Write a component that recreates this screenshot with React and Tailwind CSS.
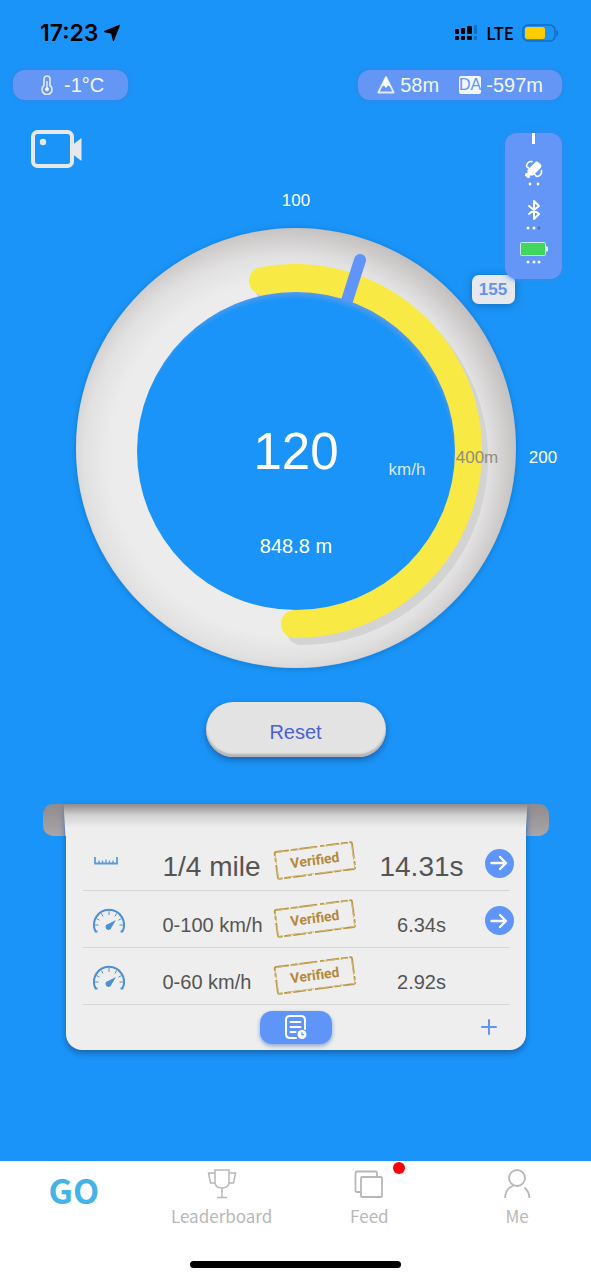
import { Plus } from 'lucide-react'

const runs = [
  { id: 1, name: '1/4 mile', time: '14.31s', icon: 'ruler', large: true, details: true },
  { id: 2, name: '0-100 km/h', time: '6.34s', icon: 'speed', large: false, details: true },
  { id: 3, name: '0-60 km/h', time: '2.92s', icon: 'speed', large: false, details: false },
]

function StatusBar() {
  return (
    <div className="flex h-[70px] items-center justify-between pr-8 pb-1 pl-10 text-black">
      <div className="flex items-center gap-1">
        <span className="font-[Inter,sans-serif] text-[23px] leading-7 font-semibold">17:23</span>
        <svg width="18" height="18" viewBox="0 0 18 18" aria-hidden="true">
          <path d="M16.6 1.2 10.4 17 8.6 9.2 1 7.6Z" fill="currentColor" stroke="currentColor" strokeLinejoin="round" />
        </svg>
      </div>
      <div className="flex items-center gap-2">
        <svg width="25" height="18" viewBox="0 0 25 18" aria-hidden="true">
          <g fill="#000">
            <rect x="2" y="5" width="4" height="5" rx="1" />
            <rect x="8" y="4" width="4" height="6" rx="1" />
            <rect x="14" y="2" width="5" height="8" rx="1" />
            <rect x="2" y="12" width="4" height="4" rx="1" />
            <rect x="8" y="12" width="4" height="4" rx="1" />
            <rect x="14" y="12" width="5" height="4" rx="1" />
          </g>
          <g fill="#0f6fc4">
            <rect x="21" y="1" width="3" height="9" rx="1" />
            <rect x="21" y="12" width="3" height="4" rx="1" />
          </g>
        </svg>
        <span className="font-['Noto_Sans_CJK_SC',sans-serif] text-[17px] leading-6 font-medium">LTE</span>
        <svg width="37" height="18" viewBox="0 0 37 18" aria-hidden="true">
          <rect x="1" y="1" width="32" height="16" rx="5" fill="none" stroke="#1769b5" strokeWidth="1.5" />
          <path d="M35 6.5q1.6 2.5 0 5Z" fill="#1769b5" stroke="#1769b5" />
          <rect x="3" y="3" width="20" height="12" rx="2.5" fill="#ffcc02" />
        </svg>
      </div>
    </div>
  )
}

function WeatherBar() {
  const chip = 'flex h-[30px] items-center rounded-xl bg-[#6496f5] text-xl leading-6 shadow-[0_0_5px_#3d7fe0]'
  return (
    <div className="flex justify-between pr-[29px] pl-[13px] text-[#f2f6ff]">
      <div className={`${chip} gap-[11px] pr-6 pl-7`}>
        <svg width="12" height="20" viewBox="0 0 12 20" fill="none" stroke="#dfe9ff" aria-hidden="true">
          <path d="M3 10.5V4a3 3 0 0 1 6 0v6.5a5 5 0 1 1-6 0Z" strokeWidth="1.7" />
          <path d="M6 6v8" strokeWidth="1.5" />
          <circle cx="6" cy="14.2" r="1.7" fill="#fff" />
        </svg>
        <span>-1°C</span>
      </div>
      <div className={`${chip} gap-5 px-[19px]`}>
        <span className="flex items-center gap-[5px]">
          <svg width="18" height="18" viewBox="0 0 18 18" aria-hidden="true">
            <path d="M9 1 1.3 16.5h15.4Z" fill="none" stroke="#dfe9ff" strokeWidth="1.8" strokeLinejoin="round" />
            <path d="M9 1 4 11 7 9.5l2 2.5 2-2.500 3 1.500Z" fill="#fff" />
          </svg>
          58m
        </span>
        <span className="flex items-center gap-[5px]">
          <span className="rounded-xs bg-[#f2f6ff] text-base leading-[18px] text-[#6496f5]">DA</span>
          -597m
        </span>
      </div>
    </div>
  )
}

function Dots({ children }) {
  return (
    <svg width="16" height="4" viewBox="0 0 16 4" fill="#fff" aria-hidden="true">
      {children}
    </svg>
  )
}

function DevicePanel() {
  return (
    <div className="mt-[3px] flex h-[146px] w-[57px] flex-col items-center rounded-xl bg-[#6496f7] shadow-[0_0_6px_#3d86e8]">
      <div className="h-[11px] w-[3px] bg-white" />
      <svg className="mt-4" width="18" height="18" viewBox="0 0 18 18" aria-hidden="true">
        <g transform="rotate(-45 9 9)" fill="#fff">
          <rect x="2" y="5" width="15" height="8" rx="3" />
          <path d="M5 9-2 5v8Z" />
        </g>
        <g fill="none" stroke="#fff" strokeWidth="1.6" strokeLinecap="round">
          <path d="M7 1.600Q2 1 1.500 6.500l2 1.500" />
          <path d="M16.500 10.500Q17 16 11.500 16.500L10 14.500" />
        </g>
      </svg>
      <div className="mt-1">
        <Dots>
          <circle cx="4" cy="2" r="1.4" />
          <circle cx="12" cy="2" r="1.4" />
        </Dots>
      </div>
      <svg className="mt-3" width="16" height="24" viewBox="0 0 16 24" fill="none" stroke="#fff" strokeWidth="2" aria-hidden="true">
        <path d="M3 8l10 8-5 5V3l5 5L3 16" strokeLinejoin="round" strokeLinecap="round" />
      </svg>
      <div className="mt-1">
        <Dots>
          <circle cx="2" cy="2" r="1.5" />
          <circle cx="8" cy="2" r="1.5" />
          <circle cx="13" cy="2" r="1.5" fill="#4a6fc0" />
        </Dots>
      </div>
      <svg className="mt-3" width="28" height="14" viewBox="0 0 28 14" aria-hidden="true">
        <rect x="0.5" y="0.5" width="25" height="13" rx="1" fill="#43d65c" stroke="#c5e8f0" />
        <path d="M26 4.5h1q1 0 1 1v3q0 1-1 1h-1Z" fill="#e4ecff" />
      </svg>
      <div className="mt-1">
        <Dots>
          <circle cx="2" cy="2" r="1.5" />
          <circle cx="8" cy="2" r="1.5" />
          <circle cx="13" cy="2" r="1.5" />
        </Dots>
      </div>
    </div>
  )
}

function Gauge() {
  return (
    <svg className="mx-auto mt-[88px] w-[560px] max-w-full" viewBox="0 0 560 492" role="img" aria-label="Speed">
      <defs>
        <radialGradient id="ring" gradientUnits="userSpaceOnUse" cx="270" cy="270" r="232">
          <stop offset="0.76" stopColor="#ececec" />
          <stop offset="0.87" stopColor="#e2e1e1" />
          <stop offset="1" stopColor="#c4c1c0" />
        </radialGradient>
        <radialGradient id="dial" gradientUnits="userSpaceOnUse" cx="278" cy="270" r="167">
          <stop offset="0.95" stopColor="#1a94f8" />
          <stop offset="1" stopColor="#5c9bea" />
        </radialGradient>
        <filter id="soft" x="-10%" y="-10%" width="120%" height="120%">
          <feDropShadow dx="0" dy="1" stdDeviation="3" floodColor="#1565b5" floodOpacity="0.6" />
        </filter>
        <filter id="tipShadow" x="-40%" y="-40%" width="180%" height="200%">
          <feDropShadow dx="0" dy="1" stdDeviation="4" floodColor="#123f75" floodOpacity="0.5" />
        </filter>
      </defs>
      <circle cx="280" cy="260" r="220" fill="url(#ring)" filter="url(#soft)" />
      <g fill="none" strokeWidth="28" strokeLinecap="round">
        <path d="M247 93A173 173 0 1 1 279 436" stroke="#d3d3d3" transform="translate(6 7)" />
        <path d="M247 93A173 173 0 1 1 279 436" stroke="#f8e945" />
      </g>
      <path d="M344 72 330 116" stroke="#5f95f8" strokeWidth="12" strokeLinecap="round" />
      <circle cx="280" cy="263" r="159" fill="url(#dial)" />
      <g fill="#fff" fontSize="17">
        <text x="280" y="18" textAnchor="middle">100</text>
        <text x="527" y="275" textAnchor="middle">200</text>
        <text x="391" y="287" textAnchor="middle" fill="#d5e9fb">km/h</text>
        <text x="461" y="275" textAnchor="middle" fill="#8f8d80">400m</text>
        <text x="280" y="281" textAnchor="middle" fontSize="51">120</text>
        <text x="280" y="365" textAnchor="middle" fontSize="20">848.8 m</text>
      </g>
      <rect x="456" y="87" width="43" height="29" rx="7" fill="#e6e8ec" filter="url(#tipShadow)" />
      <text x="477" y="107" textAnchor="middle" fontSize="17" fontWeight="700" fill="#6494ec">155</text>
    </svg>
  )
}

function CameraButton() {
  return (
    <button type="button" aria-label="Record video" className="self-start">
      <svg width="52" height="38" viewBox="0 0 52 38" fill="#e6e8ec" aria-hidden="true">
        <rect x="2" y="2" width="39" height="34" rx="4.5" fill="none" stroke="#e6e8ec" strokeWidth="4" />
        <circle cx="12" cy="12" r="3.2" />
        <path d="M42 14.5 50.500 8v23L42 24.500Z" />
      </svg>
    </button>
  )
}

function RulerIcon() {
  return (
    <svg className="ml-[11px]" width="24" height="8" viewBox="0 0 24 8" fill="none" stroke="#5b9ada" aria-hidden="true">
      <path d="M1 0v6.5h22V0" strokeWidth="1.8" />
      <path d="M5 3.5V6M8.500 3.500V6M12 2.500V6M15.500 3.500V6M19 3.500V6" strokeWidth="1.3" />
    </svg>
  )
}

function SpeedIcon() {
  return (
    <svg className="mt-1 ml-[10px]" width="32" height="26" viewBox="0 0 32 26" fill="none" stroke="#4d90d4" aria-hidden="true">
      <path d="M4.5 23.5H2.600A15 15 0 1 1 29.400 23.500H27.500" strokeWidth="2" />
      <path d="M16 3v4M8.500 5.500l1.500 3M23.500 5.500l-1.500 3M3.500 10.500l3 1.700M28.500 10.500l-3 1.700M2 17h3.500M30 17h-3.500" strokeWidth="1" />
      <path d="M23 12l-4.500 7.500a3 3 0 1 1-3.500-3.500Z" fill="#4d90d4" stroke="none" />
    </svg>
  )
}

function VerifiedStamp() {
  return (
    <svg width="84" height="40" viewBox="0 0 84 40" role="img" aria-label="Verified">
      <g transform="rotate(-7.5 42 20)">
        <g fill="none" stroke="#b9953f">
          <rect x="3" y="6" width="78" height="27" rx="1.5" strokeWidth="1.8" strokeDasharray="13 2 7 1.5 18 3 4 2" />
          <rect x="3.5" y="6.5" width="77" height="26" rx="1" strokeWidth="1" stroke="#d3bb80" strokeDasharray="9 5 15 3" />
        </g>
        <text x="42" y="24" textAnchor="middle" fontFamily="Roboto, sans-serif" fontSize="14" fontWeight="700" fill="#b4893a">
          Verified
        </text>
      </g>
    </svg>
  )
}

function RunRow({ run }) {
  const size = run.large ? 'text-[28px]' : 'text-xl'
  return (
    <tr className="h-[57px] border-b border-[#d6d6d6]">
      <td className="w-20">{run.icon === 'ruler' ? <RulerIcon /> : <SpeedIcon />}</td>
      <th scope="row" className={`${size} w-[108px] pt-3 text-left leading-8 font-normal whitespace-nowrap text-[#555]`}>
        {run.name}
      </th>
      <td className="w-[88px]">
        <div className="flex justify-center">
          <VerifiedStamp />
        </div>
      </td>
      <td className={`${size} pt-3 text-center leading-8 text-[#555]`}>{run.time}</td>
      <td className="w-[25px]">
        {run.details && (
          <button
            type="button"
            aria-label={`Open ${run.name}`}
            className="mt-1 -mr-2 flex size-[29px] items-center justify-center rounded-full bg-[#5f95f8]"
          >
            <svg width="18" height="16" viewBox="0 0 18 16" fill="none" stroke="#fff" strokeWidth="2.4" aria-hidden="true">
              <path d="M1.5 8h14M10 2l6 6-6 6" strokeLinecap="round" strokeLinejoin="round" />
            </svg>
          </button>
        )}
      </td>
    </tr>
  )
}

function ResultsCard() {
  return (
    <section className="relative isolate mx-auto mt-[47px] w-[460px] max-w-[86%]">
      <div className="absolute -inset-x-[23px] top-0 -z-10 h-8 rounded-[10px] bg-linear-to-b from-[#8f8b8d] to-[#aaa5a9]" />
      <div className="absolute -inset-x-[2px] top-0 h-8 bg-linear-to-b from-[#8d8b8b] via-[#d2d1d1] via-35% to-[#eee] to-75% [clip-path:polygon(0_0,100%_0,calc(100%-2px)_100%,2px_100%)]" />
      <div className="rounded-b-2xl bg-[#eee] pt-[29px] pr-4 pl-[17px] shadow-[0_3px_6px_#1a62ad]">
        <table className="w-full table-fixed border-collapse">
          <tbody>
            {runs.map(run => (
              <RunRow key={run.id} run={run} />
            ))}
          </tbody>
        </table>
        <div className="grid h-[45px] grid-cols-3 items-center">
          <button
            type="button"
            aria-label="History"
            className="col-start-2 flex h-[33px] w-[72px] items-center justify-center justify-self-center rounded-xl bg-[#5f95f8] shadow-[0_2px_4px_#8ba4d0]"
          >
            <svg width="22" height="25" viewBox="0 0 22 25" fill="none" stroke="#fff" strokeWidth="2" strokeLinecap="round" aria-hidden="true">
              <path d="M11 23H5q-4 0-4-4V5q0-4 4-4h11q4 0 4 4v9" />
              <path d="M5.5 7h10M5.500 12h10M5.500 17h5" />
              <circle cx="17" cy="19.5" r="4.5" fill="#fff" stroke="none" />
              <path d="M17 17.5v2.200h1.500" stroke="#5f95f8" strokeWidth="1.2" />
            </svg>
          </button>
          <button type="button" aria-label="Add run" className="mr-2 justify-self-end text-[#5f95f8]">
            <Plus size={24} strokeWidth={2} />
          </button>
        </div>
      </div>
    </section>
  )
}

function Tab({ label, children }) {
  return (
    <a href="#" className="flex flex-col items-center text-[#b8b8b8]">
      <span className="relative flex h-[30px] items-center justify-center">{children}</span>
      <span className="mt-[5px] text-[17px] leading-6">{label}</span>
    </a>
  )
}

function TabBar() {
  return (
    <nav className="mt-auto bg-white font-['Noto_Sans_CJK_SC',sans-serif]">
      <div className="grid grid-cols-4 pt-2">
        <a href="#" className="text-center text-[34px] leading-[42px] font-bold text-[#45b3e8]">
          GO
        </a>
        <Tab label="Leaderboard">
          <svg width="30" height="30" viewBox="0 0 30 30" fill="none" stroke="#b8b8b8" strokeWidth="1.5" aria-hidden="true">
            <path d="M8 1h14v12q0 6-7 6t-7-6Z" />
            <path d="M8 4H1.500L3.500 14H8M22 4h6.500L26.500 14H22" />
            <path d="M15 19v9M10 28.500h10" />
          </svg>
        </Tab>
        <Tab label="Feed">
          <svg width="30" height="30" viewBox="0 0 30 30" fill="none" stroke="#b8b8b8" strokeWidth="1.8" aria-hidden="true">
            <rect x="7" y="8" width="21" height="20" rx="1" />
            <path d="M7 23H3q-1.500 0-1.500-1.500V4Q1.500 2.500 3 2.500H21.500Q23 2.500 23 4V8" />
          </svg>
          <span className="absolute -top-[7px] -right-[21px] size-3 rounded-full bg-[#f80305]" />
        </Tab>
        <Tab label="Me">
          <svg width="30" height="30" viewBox="0 0 30 30" fill="none" stroke="#b8b8b8" strokeWidth="1.8" aria-hidden="true">
            <circle cx="15" cy="9" r="8" />
            <path d="M3 29q.5-9.500 8.500-12.500M22.500 18.500q4.500 4 5 10.500" />
          </svg>
        </Tab>
      </div>
      <div className="mx-auto mt-[33px] mb-3 h-[7px] w-[211px] rounded-full bg-black" />
    </nav>
  )
}

export default function App() {
  return (
    <div className="flex min-h-screen flex-col bg-[#1a94f8] font-['Liberation_Sans',sans-serif]">
      <StatusBar />
      <WeatherBar />
      <main className="pb-[110px]">
        <div className="grid *:[grid-area:1/1]">
          <Gauge />
          <div className="z-10 flex items-start justify-between self-start pt-[30px] pr-[29px] pl-[31px]">
            <CameraButton />
            <DevicePanel />
          </div>
        </div>
        <button
          type="button"
          className="mx-auto mt-[22px] block h-[55px] w-[180px] rounded-full bg-[#e3e3e4] pt-1 text-xl text-[#4a62d8] shadow-[inset_0_-3px_2px_#b5b3b3,0_3px_6px_#1a62ad]"
        >
          Reset
        </button>
        <ResultsCard />
      </main>
      <TabBar />
    </div>
  )
}
